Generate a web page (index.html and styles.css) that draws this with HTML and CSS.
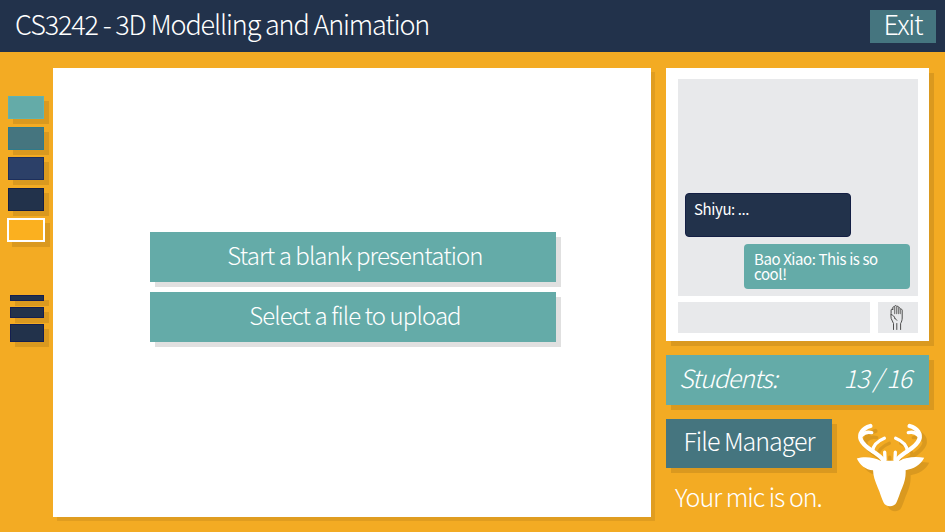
FILE: index.html
```html
<!DOCTYPE html>
<html lang="en">
<head>
    <meta charset="UTF-8">
    <title>CS3242 - 3D Modelling and Animation</title>
    <link rel="stylesheet" href="styles.css">
</head>
<body>
    <header class="topbar">
        <h1 class="course-title">CS3242 - 3D Modelling and Animation</h1>
        <button class="exit-btn">Exit</button>
    </header>

    <main class="workspace">
        <aside class="tools">
            <div class="colors">
                <div class="swatch swatch-teal"></div>
                <div class="swatch swatch-deep"></div>
                <div class="swatch swatch-blue"></div>
                <div class="swatch swatch-navy"></div>
                <div class="swatch swatch-yellow"></div>
            </div>
            <div class="weights">
                <div class="weight weight-s"></div>
                <div class="weight weight-m"></div>
                <div class="weight weight-l"></div>
            </div>
        </aside>

        <section class="canvas">
            <button class="action-btn">Start a blank presentation</button>
            <button class="action-btn">Select a file to upload</button>
        </section>

        <aside class="side">
            <div class="chat-card">
                <div class="messages">
                    <div class="bubble bubble-other">Shiyu: ...</div>
                    <div class="bubble bubble-own">Bao Xiao: This is so cool!</div>
                </div>
                <div class="chat-input">
                    <div class="input-box"></div>
                    <div class="hand-btn">
                        <svg class="hand-icon" viewBox="0 0 14 25" fill="none" stroke="#3c3c3c" stroke-width="0.9" stroke-linecap="round" stroke-linejoin="round">
                            <path d="M3.5 24.5 V18.5 L1.2 13.5 C0.7 12.2 1 10.2 1.1 8.5 V5 C1.1 3.9 2.7 3.9 2.8 5 V2.6 C2.8 1.5 4.5 1.5 4.6 2.6 V1.4 C4.6 0.3 6.5 0.3 6.6 1.4 V2 C6.7 1 8.4 1 8.5 2.1 V3.4 C8.7 2.4 10.2 2.5 10.3 3.6 V4.8 C10.5 3.9 12.2 4 12.2 5.1 V13 C12.2 15 11.5 17 10.6 18.5 V24.5" />
                            <path d="M1.1 9.5 C3 10.2 4.6 11.2 4.9 13.3 M4.9 13.3 L6.8 15.3 M6.8 18.5 V24.5" />
                            <path d="M4.6 2.6 V8.5 M6.6 1.4 V8.5 M8.5 2.1 V8.5 M10.3 3.6 V8.5" stroke="#808080" stroke-width="1.3" />
                        </svg>
                    </div>
                </div>
            </div>

            <div class="students">
                <span>Students:</span>
                <span>13 / 16</span>
            </div>

            <div class="side-bottom">
                <div class="file-col">
                    <button class="file-btn">File Manager</button>
                    <p class="mic-status">Your mic is on.</p>
                </div>
                <svg class="deer" viewBox="30 35 216 262">
                    <g fill="none" stroke="#fff" stroke-width="13" stroke-linecap="round" stroke-linejoin="round">
                        <path d="M116 152 C100 125 58 118 47 88 C41 70 52 54 76 47" />
                        <path d="M50 76 C56 68 66 64 80 67" stroke-width="10" />
                        <path d="M82 124 C84 106 98 92 118 84" stroke-width="10" />
                        <path d="M120 150 L119 126" stroke-width="10" />
                        <path d="M154 152 C170 125 212 118 223 88 C229 70 218 54 194 47" />
                        <path d="M220 76 C214 68 204 64 190 67" stroke-width="10" />
                        <path d="M188 124 C186 106 172 92 152 84" stroke-width="10" />
                        <path d="M150 150 L151 126" stroke-width="10" />
                    </g>
                    <path fill="#fff" d="M35 145 C55 138 88 140 106 152 L164 152 C182 140 215 138 238 143 C228 164 205 178 182 180 C183 198 180 215 172 232 C164 250 160 266 154 278 C148 292 122 292 116 278 C110 266 106 250 98 232 C90 212 84 196 84 180 C62 180 44 164 35 145 Z" />
                </svg>
            </div>
        </aside>
    </main>
</body>
</html>
```

FILE: styles.css
```css
* {
    box-sizing: border-box;
}

html, body {
    margin: 0;
    height: 100%;
}

body {
    display: flex;
    flex-direction: column;
    height: 532px;
    overflow: hidden;
    background-color: #f3ab23;
    color: #fff;
    font-family: "Noto Sans CJK SC", "Noto Sans", sans-serif;
    font-weight: 300;
}

button {
    font-family: inherit;
    font-weight: inherit;
    color: inherit;
    line-height: 1;
    border: 0;
    padding: 0;
}

.topbar {
    display: flex;
    flex: none;
    align-items: center;
    justify-content: space-between;
    height: 52px;
    padding: 0 9px 0 15px;
    background-color: #22324b;
}

.course-title {
    margin: 0 0 6px;
    font-size: 27px;
    font-weight: 300;
    line-height: 1;
    letter-spacing: -1.15px;
}

.exit-btn {
    width: 66px;
    height: 33px;
    padding-bottom: 5px;
    background-color: #45757f;
    font-size: 27px;
    letter-spacing: -1.2px;
}

.workspace {
    display: flex;
    flex: 1;
    align-items: flex-start;
    padding-top: 16px;
}

.tools {
    flex: none;
    width: 53px;
    padding: 28px 0 0 8px;
}

.colors {
    display: flex;
    flex-direction: column;
    gap: 7.5px;
}

.swatch {
    width: 36px;
    height: 23px;
    box-shadow: 5px 5px 0 rgba(0, 0, 0, 0.1);
}

.swatch-teal {
    background-color: #64aba8;
    border: 1px solid #5fb3b3;
}

.swatch-deep {
    background-color: #45757f;
    border: 1px solid #2f7a8a;
}

.swatch-blue {
    background-color: #2c4068;
    border: 1px solid #1d2f5c;
}

.swatch-navy {
    background-color: #22324b;
    border: 1px solid #141f44;
}

.swatch-yellow {
    width: 38px;
    height: 24px;
    margin-left: -1px;
    background-color: #fbb01f;
    border: 2px solid #fff;
}

.weights {
    display: flex;
    flex-direction: column;
    gap: 6px;
    margin: 53px 0 0 2px;
}

.weight {
    width: 34px;
    background-color: #22324b;
    border: 1px solid #141f50;
    box-shadow: 5px 5px 0 rgba(0, 0, 0, 0.1);
}

.weight-s {
    height: 6px;
}

.weight-m {
    height: 11px;
}

.weight-l {
    height: 18px;
}

.canvas {
    display: flex;
    flex: none;
    flex-direction: column;
    align-items: center;
    justify-content: center;
    gap: 10px;
    width: 598px;
    height: 449px;
    padding: 0 0 11px 1px;
    background-color: #fff;
    box-shadow: 4px 4px 0 rgba(0, 0, 0, 0.08);
}

.action-btn {
    width: 406px;
    height: 50px;
    padding: 0 0 4px 5px;
    background-color: #64aba8;
    font-size: 24px;
    letter-spacing: -0.9px;
    box-shadow: 5px 5px 0 rgba(0, 0, 0, 0.12);
}

.side {
    flex: none;
    width: 263px;
    margin-left: 15px;
}

.chat-card {
    height: 273px;
    padding: 11px 11px 8px 12px;
    background-color: #fff;
    box-shadow: 5px 5px 0 rgba(0, 0, 0, 0.1);
}

.messages {
    display: flex;
    flex-direction: column;
    gap: 7px;
    justify-content: flex-end;
    height: 217px;
    padding: 0 8px 7px 7px;
    background-color: #e8e9eb;
}

.bubble {
    width: 166px;
    height: 45px;
    padding: 7px 8px;
    border-radius: 4px;
    font-size: 15px;
    font-weight: 400;
    line-height: 15px;
    letter-spacing: -0.4px;
}

.bubble-other {
    height: 44px;
    background-color: #22324b;
    border: 1px solid #141f44;
}

.bubble-own {
    align-self: flex-end;
    padding: 7px 10px;
    background-color: #64aba8;
}

.chat-input {
    display: flex;
    gap: 8px;
    margin-top: 6px;
}

.input-box {
    width: 192px;
    height: 31px;
    background-color: #e8e9eb;
}

.hand-btn {
    display: flex;
    align-items: center;
    justify-content: center;
    width: 40px;
    height: 31px;
    padding-right: 3px;
    background-color: #e8e9eb;
}

.hand-icon {
    width: 14px;
    height: 25px;
}

.students {
    display: flex;
    justify-content: space-between;
    align-items: center;
    height: 50px;
    margin-top: 14px;
    padding: 0 18px 6px 13px;
    background-color: #64aba8;
    font-size: 25px;
    font-style: italic;
    letter-spacing: -1px;
    box-shadow: 5px 5px 0 rgba(0, 0, 0, 0.1);
}

.side-bottom {
    display: flex;
    align-items: flex-start;
    margin-top: 14px;
}

.file-col {
    flex: none;
    width: 189px;
}

.file-btn {
    display: block;
    width: 166px;
    height: 49px;
    padding-bottom: 6px;
    background-color: #45757f;
    font-size: 25px;
    letter-spacing: -1px;
    box-shadow: 5px 5px 0 rgba(0, 0, 0, 0.1);
}

.mic-status {
    margin: 10px 0 0 9px;
    font-size: 25px;
    line-height: 36px;
    letter-spacing: -1px;
    white-space: nowrap;
}

.deer {
    flex: none;
    width: 72px;
    height: 87px;
    margin-top: 3px;
    filter: drop-shadow(5px 5px 0 rgba(0, 0, 0, 0.1));
}
```
